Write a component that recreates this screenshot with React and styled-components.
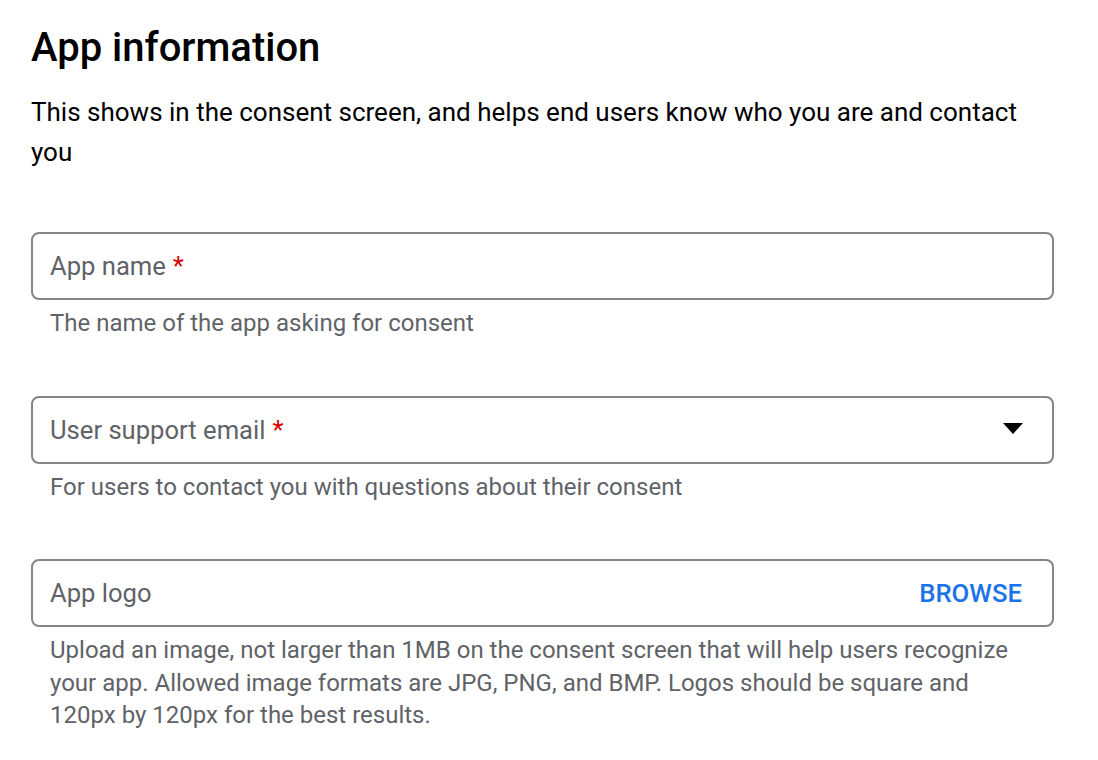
import React from 'react'
import styled, { createGlobalStyle } from 'styled-components'

const GlobalStyle = createGlobalStyle`
   html, body {
      margin: 0;
      padding: 0;
      background: #fff;
      font-family: Roboto, "Noto Sans", Arial, sans-serif;
   }
`

const Page = styled.main`
   width: 1023px;
   padding: 22px 0 0 31px;
`

const Title = styled.h1`
   margin: 0;
   font-size: 40px;
   line-height: 52px;
   font-weight: 500;
   color: #000;
`

const Description = styled.p`
   margin: 18px 0 0;
   font-size: 26px;
   line-height: 40px;
   color: #000;
`

const Fields = styled.div`
   display: flex;
   flex-direction: column;
   margin-top: 60px;
`

const Field = styled.div`
   display: flex;
   flex-direction: column;
   margin-bottom: ${(p) => p.$spacing || 0}px;
`

const Box = styled.div`
   height: 68px;
   box-sizing: border-box;
   border: 2px solid #80868b;
   border-radius: 8px;
   display: flex;
   align-items: center;
   justify-content: space-between;
   padding: 0 30px 0 17px;
`

const Label = styled.span`
   font-size: 25.6px;
   color: #5f6368;
`

const Required = styled.span`
   color: #d50000;
   margin-left: 7px;
`

const Helper = styled.div`
   padding: 7px 0 0 19px;
   font-size: 24px;
   line-height: 32.5px;
   color: #5f6368;
   max-width: 975px;
`

const Arrow = styled.span`
   width: 0;
   height: 0;
   border-left: 10px solid transparent;
   border-right: 10px solid transparent;
   border-top: 11px solid #000;
   margin: -3px -1px 0 0;
`

const Browse = styled.button`
   border: none;
   background: transparent;
   padding: 0;
   font-family: inherit;
   font-size: 25.7px;
   font-weight: 500;
   color: #1a73e8;
   cursor: pointer;
`

export default function App() {
   return (
      <>
         <GlobalStyle />
         <Page>
            <Title>App information</Title>
            <Description>
               This shows in the consent screen, and helps end users know who you are and contact you
            </Description>
            <Fields>
               <Field $spacing={56}>
                  <Box>
                     <Label>
                        App name<Required>*</Required>
                     </Label>
                  </Box>
                  <Helper>The name of the app asking for consent</Helper>
               </Field>
               <Field $spacing={56}>
                  <Box>
                     <Label>
                        User support email<Required>*</Required>
                     </Label>
                     <Arrow />
                  </Box>
                  <Helper>For users to contact you with questions about their consent</Helper>
               </Field>
               <Field>
                  <Box>
                     <Label>App logo</Label>
                     <Browse>BROWSE</Browse>
                  </Box>
                  <Helper>
                     Upload an image, not larger than 1MB on the consent screen that will help users recognize
                     your app. Allowed image formats are JPG, PNG, and BMP. Logos should be square and 120px by
                     120px for the best results.
                  </Helper>
               </Field>
            </Fields>
         </Page>
      </>
   )
}
